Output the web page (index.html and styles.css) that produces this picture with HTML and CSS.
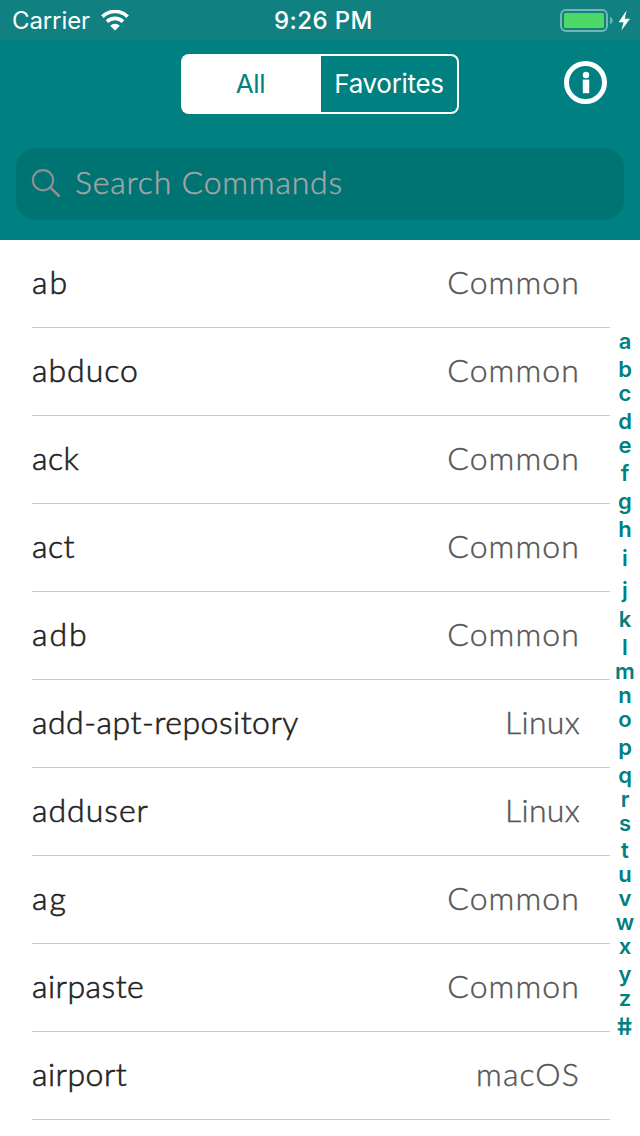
FILE: index.html
```
<!DOCTYPE html>
<html lang="en">
<head>
<meta charset="utf-8">
<title>Commands</title>
<link rel="stylesheet" href="styles.css">
</head>
<body>
<div class="screen">
  <header class="status">
    <div class="status-left">
      <span class="carrier">Carrier</span>
      <svg class="wifi" viewBox="0 0 28 21" width="28" height="21">
        <path d="M1.4 6.6A18 18 0 0 1 26.6 6.6" fill="none" stroke="#fff" stroke-width="3.8"/>
        <path d="M6 11.6A11.5 11.5 0 0 1 22 11.6" fill="none" stroke="#fff" stroke-width="3.6"/>
        <path d="M14 20.4L9.2 15.7A6.9 6.9 0 0 1 18.8 15.7Z" fill="#fff"/>
      </svg>
    </div>
    <span class="clock">9:26 PM</span>
    <svg class="battery" viewBox="0 0 72 26" width="72" height="26">
      <rect x="1" y="3" width="46" height="21" rx="5" fill="none" stroke="#74b5b5" stroke-width="2"/>
      <rect x="4" y="6" width="40" height="15" rx="1.6" fill="#4cd964"/>
      <path d="M50 10C53.6 10.7 53.6 16.3 50 17Z" fill="#74b5b5"/>
      <path d="M66.5 3.5L58.6 15.2H63.5L61.4 23.5L70 11.8H64.8Z" fill="#fff"/>
    </svg>
  </header>
  <nav class="toolbar">
    <div class="segments">
      <span class="segment selected">All</span>
      <span class="segment">Favorites</span>
    </div>
    <svg class="info" viewBox="0 0 43 43" width="43" height="43">
      <circle cx="21.5" cy="21.5" r="19" fill="none" stroke="#fff" stroke-width="5"/>
      <circle cx="22" cy="14" r="3.2" fill="#fff"/>
      <rect x="18.8" y="18.6" width="6.4" height="13.6" fill="#fff"/>
    </svg>
  </nav>
  <div class="search-wrap">
    <div class="search">
      <svg class="glass" viewBox="0 0 30 30" width="30" height="30">
        <circle cx="12" cy="11.2" r="10.1" fill="none" stroke="#8e8e93" stroke-width="2.2"/>
        <path d="M19.2 18.4L27.8 26.8" stroke="#8e8e93" stroke-width="2.6" stroke-linecap="round"/>
      </svg>
      <span class="placeholder">Search Commands</span>
    </div>
  </div>
  <main class="content">
    <ul class="list">
      <li><span class="name short">ab</span><span class="os common">Common</span></li>
      <li><span class="name">abduco</span><span class="os common">Common</span></li>
      <li><span class="name tight">ack</span><span class="os common">Common</span></li>
      <li><span class="name tight">act</span><span class="os common">Common</span></li>
      <li><span class="name short">adb</span><span class="os common">Common</span></li>
      <li><span class="name tight">add-apt-repository</span><span class="os linux">Linux</span></li>
      <li><span class="name">adduser</span><span class="os linux">Linux</span></li>
      <li><span class="name short">ag</span><span class="os common">Common</span></li>
      <li><span class="name tight">airpaste</span><span class="os common">Common</span></li>
      <li><span class="name tight">airport</span><span class="os macos">macOS</span></li>
    </ul>
    <div class="index">
      <span>a</span><span>b</span><span>c</span><span>d</span><span>e</span><span>f</span><span>g</span><span>h</span><span>i</span><span>j</span><span>k</span><span>l</span><span>m</span><span>n</span><span>o</span><span>p</span><span>q</span><span>r</span><span>s</span><span>t</span><span>u</span><span>v</span><span>w</span><span>x</span><span>y</span><span>z</span><span class="hash">#</span>
    </div>
  </main>
</div>
</body>
</html>
```
FILE: styles.css
```
* { box-sizing: border-box; }
body { margin: 0; background: #fff; font-family: Inter, "Liberation Sans", sans-serif; }
.screen { width: 640px; height: 1136px; overflow: hidden; display: flex; flex-direction: column; background: #fff; }

.status { height: 40px; flex: none; background: #108080; color: #fff; display: grid; grid-template-columns: 1fr auto 1fr; align-items: center; padding: 0 8px 0 12px; font-size: 24px; line-height: 38px; }
.status-left { display: flex; align-items: center; gap: 11px; }
.carrier { letter-spacing: -0.1px; padding-top: 2px; }
.clock { font-weight: 500; letter-spacing: 0.4px; padding: 2px 0 0 3px; }
.battery { justify-self: end; }

.toolbar { height: 108px; flex: none; background: #008080; display: grid; grid-template-columns: 1fr 278px 1fr; align-items: start; padding: 14px 33px 0; }
.segments { grid-column: 2; height: 60px; padding: 2px; border-radius: 8px; background: #fff; display: flex; font-size: 26px; line-height: 56px; text-align: center; color: #fff; }
.segment { flex: 1; letter-spacing: -0.3px; background: #008080; border-radius: 0 6px 6px 0; }
.selected { flex: 0 0 138px; padding-right: 3px; background: #fff; color: #008080; }
.info { justify-self: end; margin-top: 7px; }

.search-wrap { height: 92px; flex: none; background: #008080; padding: 0 16px; }
.search { height: 72px; border-radius: 20px; background: #007373; display: flex; align-items: center; padding: 0 15px; gap: 14px; }
.placeholder { font-family: Lato, sans-serif; font-weight: 300; font-size: 32px; line-height: 68px; padding-bottom: 4px; color: #a5a5a5; letter-spacing: 0.8px; -webkit-text-stroke: 0.45px #a5a5a5; }

.content { display: flex; flex: 1; min-height: 0; }
.list { width: 610px; flex: none; margin: 0; padding: 0 0 0 32px; list-style: none; }
.list li { height: 88px; border-bottom: 1px solid #c8c7cc; display: flex; justify-content: space-between; padding: 0 30px 3px 0; font-family: Lato, sans-serif; font-size: 32px; font-weight: 300; line-height: 84px; }
.name { color: #222; letter-spacing: 1px; -webkit-text-stroke: 0.6px #222; }
.short { letter-spacing: 1.9px; }
.tight { letter-spacing: 0.5px; }
.os { color: #555; -webkit-text-stroke: 0.4px #555; }
.common { letter-spacing: 1.1px; }
.linux { letter-spacing: 0.3px; }
.macos { letter-spacing: 1.1px; }

.index { width: 30px; padding-top: 89px; display: grid; grid-template-rows: 24px 28px 24px 28px 24px 28px 28px 28px 29px 32px 29px 28px 24px 24px 24px 28px 28px 24px 24px 27px 24px 24px 24px 24px 28px 24px 29px; align-items: end; justify-items: center; font-size: 22px; line-height: 24px; font-weight: 600; color: #008080; }
.hash { font-size: 24px; transform: skewX(8deg); }
```
